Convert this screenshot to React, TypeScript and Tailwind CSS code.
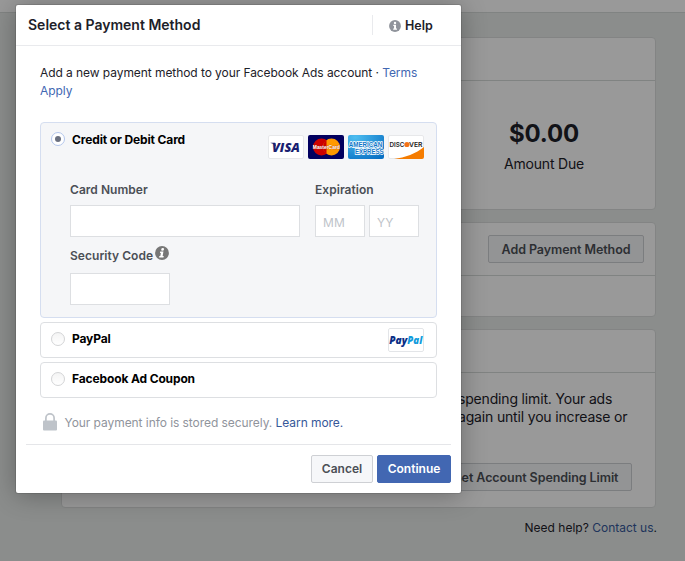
import type { ReactNode } from "react";

function InfoIcon({ size, color, italic = false }: { size: number; color: string; italic?: boolean }) {
  return (
    <svg width={size} height={size} viewBox="0 0 14 14" className="block shrink-0">
      <circle cx="7" cy="7" r="6.9" fill={color} />
      <g fill="#fff" transform={italic ? "skewX(-10) translate(1.2 0)" : undefined}>
        <circle cx="7" cy="3.4" r="1.4" />
        <path d="M5 5.500h3.200v4.500h1.100v1.400H4.900v-1.400h1V6.900H5z" />
      </g>
    </svg>
  );
}

function LockIcon() {
  return (
    <svg width="14" height="18" viewBox="0 0 14 18" className="block shrink-0">
      <path d="M2.900 8V5a4.100 4.100 0 0 1 8.200 0v3" fill="none" stroke="#bec3c9" strokeWidth="1.700" />
      <rect x="0" y="7.500" width="14" height="10" rx="1" fill="#bec3c9" />
    </svg>
  );
}

function VisaLogo() {
  return (
    <svg width="36" height="24" viewBox="0 0 36 24" className="block">
      <rect x=".5" y=".5" width="35" height="23" rx="1.500" fill="#fff" stroke="#e7e8ea" />
      <text x="4" y="17" textLength="28" lengthAdjust="spacingAndGlyphs" fontFamily="Open Sans, sans-serif" fontWeight="800" fontStyle="italic" fontSize="13" fill="#1a1f71">VISA</text>
      <path d="M2.600 7.700h4.500l1.300 4.800C7 9.800 5 8.600 2.600 8z" fill="#1a1f71" />
    </svg>
  );
}

function MasterCardLogo() {
  return (
    <svg width="36" height="24" viewBox="0 0 36 24" className="block overflow-visible">
      <rect width="36" height="24" rx="2" fill="#02005f" />
      <circle cx="13.500" cy="12" r="8.500" fill="#cc0000" />
      <circle cx="23.500" cy="12" r="8.500" fill="#ff9900" />
      <path d="M18.500 5.100a8.500 8.500 0 0 0 0 13.800z" fill="#cc0000" />
      <text x="4.800" y="14.300" textLength="27" lengthAdjust="spacingAndGlyphs" fontFamily="Liberation Sans, sans-serif" fontWeight="700" fontSize="6.200" fill="#fff" stroke="#a02018" strokeWidth=".3" paintOrder="stroke">MasterCard</text>
    </svg>
  );
}

function AmexLogo() {
  return (
    <svg width="36" height="24" viewBox="0 0 36 24" className="block overflow-visible">
      <defs>
        <radialGradient id="amex" cx="20%" cy="10%" r="110%">
          <stop offset="0" stopColor="#4dbdf0" />
          <stop offset="1" stopColor="#0870c4" />
        </radialGradient>
      </defs>
      <rect width="36" height="24" rx="2" fill="url(#amex)" />
      <g fontFamily="Liberation Sans, sans-serif" fontWeight="700" fontSize="6.800" fill="#0d77c8" stroke="#fff" strokeWidth="1.400" paintOrder="stroke">
        <text x=".8" y="11.500" textLength="33.500" lengthAdjust="spacingAndGlyphs">AMERICAN</text>
        <text x="7" y="18.500" textLength="28.500" lengthAdjust="spacingAndGlyphs">EXPRESS</text>
      </g>
    </svg>
  );
}

function DiscoverLogo() {
  return (
    <svg width="36" height="24" viewBox="0 0 36 24" className="block">
      <rect x=".5" y=".5" width="35" height="23" rx="1.500" fill="#fff" stroke="#e7e8ea" />
      <path d="M6 24C17 22.500 28 18.500 36 12v10a2 2 0 0 1-2 2z" fill="#f57c00" />
      <g fontFamily="Inter, sans-serif" fontWeight="600" fontSize="6.600" fill="#222">
        <text x="1.500" y="11.800" textLength="15" lengthAdjust="spacingAndGlyphs">DISC</text>
        <text x="21" y="11.800" textLength="13.500" lengthAdjust="spacingAndGlyphs">VER</text>
      </g>
      <circle cx="18.900" cy="9.500" r="2.600" fill="#f47216" />
    </svg>
  );
}

function PayPalLogo() {
  return (
    <svg width="36" height="24" viewBox="0 0 36 24" className="block">
      <rect x=".5" y=".5" width="35" height="23" rx="1.500" fill="#fff" stroke="#e3e5e8" />
      <g fontFamily="Open Sans, sans-serif" fontWeight="800" fontStyle="italic" fontSize="10">
        <text x="1.300" y="15.600" textLength="18" lengthAdjust="spacingAndGlyphs" fill="#0a2f86">Pay</text>
        <text x="19.300" y="15.600" textLength="15" lengthAdjust="spacingAndGlyphs" fill="#0f9bdc">Pal</text>
      </g>
    </svg>
  );
}

function Radio({ checked = false }: { checked?: boolean }) {
  return checked ? (
    <span className="flex size-[14px] shrink-0 items-center justify-center rounded-full border border-[#b3c6ec] bg-white">
      <span className="size-[6px] rounded-full bg-[#6a7080]" />
    </span>
  ) : (
    <span className="size-[14px] shrink-0 rounded-full border border-[#d3d4d6] bg-linear-to-b from-[#f4f4f4] to-white" />
  );
}

function Panel({ className, children }: { className: string; children?: ReactNode }) {
  return <section className={`flex flex-col rounded-[4px] border border-[#dadddc] bg-white ${className}`}>{children}</section>;
}

function BillingPage() {
  return (
    <div className="flex h-[561px] flex-col bg-[#e8ebea]">
      <div className="h-[13px] shrink-0 border-b border-[#d6dad9] bg-white" />
      <main className="ml-[61px] mt-6 flex w-[595px] flex-col">
        <Panel className="h-[173px]">
          <div className="h-[43px] border-b border-[#d6dad9]" />
          <div className="flex flex-col items-end pr-[76px] pt-[37px]">
            <div className="flex w-[70px] flex-col items-center whitespace-nowrap text-[#1d2129]">
              <strong className="text-[24px] font-bold leading-[32px] tracking-[-0.2px]">$0.00</strong>
              <span className="mt-[4px] text-[14px] leading-[20px] tracking-[-0.2px]">Amount Due</span>
            </div>
          </div>
        </Panel>
        <Panel className="mt-3 h-[95px]">
          <div className="flex h-[53px] items-center justify-end border-b border-[#d6dad9] pr-[11px]">
            <button className="h-7 w-[156px] whitespace-nowrap rounded-[2px] border border-[#ced0d4] bg-[#f6f7f9] pt-[2px] text-[12.500px] font-semibold tracking-[-0.08px] text-[#4b4f56]">Add Payment Method</button>
          </div>
        </Panel>
        <Panel className="mt-3 h-[179px]">
          <div className="h-[43px] shrink-0 border-b border-[#d6dad9]" />
          <p className="ml-[396px] mt-[17px] whitespace-nowrap text-[14px] leading-[18px] tracking-[-0.17px] text-[#1d2129]">
            spending limit. Your ads
            <br />
            again until you increase or
          </p>
          <div className="mt-[37px] flex justify-end pr-[23px]">
            <button className="h-7 w-[192px] whitespace-nowrap rounded-[2px] border border-[#ced0d4] bg-[#f6f7f9] pt-[2px] text-[12.500px] font-semibold tracking-[-0.08px] text-[#4b4f56]">Set Account Spending Limit</button>
          </div>
        </Panel>
        <p className="-mr-px mt-[11px] text-right text-[12px] leading-[18px] text-[#1d2129]">
          Need help? <a className="text-[#365899]">Contact us</a>.
        </p>
      </main>
    </div>
  );
}

function Dialog() {
  return (
    <div className="absolute left-4 top-[5px] flex h-[488px] w-[445px] flex-col rounded-[2px] bg-white shadow-[0_2px_26px_rgba(0,0,0,0.3),0_0_0_1px_rgba(0,0,0,0.1)]">
      <header className="flex h-[41px] shrink-0 items-center justify-between border-b border-[#e9eaed] pl-3">
        <h1 className="pb-[2px] text-[14px] font-semibold text-[#1d2129]">Select a Payment Method</h1>
        <div className="flex h-5 w-[89px] items-center border-l border-[#e9eaed] pl-4 pt-[2px]">
          <InfoIcon size={12} color="#90949c" />
          <span className="ml-1 text-[12.500px] font-semibold text-[#1d2129]">Help</span>
        </div>
      </header>
      <div className="flex flex-col px-6 pt-[18px]">
        <p className="whitespace-nowrap text-[12px] leading-[18px] tracking-[-0.07px] text-[#1d2129]">
          Add a new payment method to your Facebook Ads account · <a className="text-[#4267b2]">Terms
          <br />
          Apply</a>
        </p>
        <div className="mt-[22px] flex w-[397px] flex-col gap-1">
          <section className="flex h-[196px] flex-col rounded-[4px] border border-[#d5def0] bg-[#f5f6f8] pl-[10px] pr-3">
            <div className="flex h-9 shrink-0 pt-[9px]">
              <Radio checked />
              <span className="-mt-px ml-[7px] text-[12px] font-bold leading-[18px] tracking-[-0.13px] text-black">Credit or Debit Card</span>
              <span className="ml-auto mt-[3px] flex h-6 gap-1"><VisaLogo /><MasterCardLogo /><AmexLogo /><DiscoverLogo /></span>
            </div>
            <div className="ml-[19px] mt-[22px] flex gap-[15px] text-[12px] font-semibold leading-[18px] tracking-[0.04px] text-[#4b4f56]">
              <label className="flex w-[230px] flex-col">Card Number
                <input className="mt-[6px] h-8 border border-[#dddfe2] bg-white" />
              </label>
              <div className="flex flex-col">Expiration
                <div className="mt-[6px] flex gap-1">
                  <input placeholder="MM" className="h-8 w-[50px] border border-[#dddfe2] bg-white pl-[7px] pt-[2px] text-[12px] font-normal placeholder:text-[#bec3c9]" />
                  <input placeholder="YY" className="h-8 w-[50px] border border-[#dddfe2] bg-white pl-[7px] pt-[2px] text-[12px] font-normal placeholder:text-[#bec3c9]" />
                </div>
              </div>
            </div>
            <div className="ml-[19px] mt-[10px] flex flex-col text-[12px] font-semibold leading-[18px] tracking-[0.04px] text-[#4b4f56]">
              <div className="flex gap-[2px]">Security Code<span className="-mt-px"><InfoIcon size={14} color="#777" italic /></span></div>
              <input className="mt-2 h-8 w-[100px] border border-[#dddfe2] bg-white" />
            </div>
          </section>
          <section className="flex h-9 items-start rounded-[4px] border border-[#dddfe2] pl-[10px] pr-3 pt-[9px]">
            <Radio />
            <span className="-mt-[2px] ml-[7px] text-[12px] font-bold leading-[18px] tracking-[-0.13px] text-black">PayPal</span>
            <span className="-mt-1 ml-auto"><PayPalLogo /></span>
          </section>
          <section className="flex h-9 items-start rounded-[4px] border border-[#dddfe2] pl-[10px] pr-3 pt-[9px]">
            <Radio />
            <span className="-mt-[2px] ml-[7px] text-[12px] font-bold leading-[18px] tracking-[-0.13px] text-black">Facebook Ad Coupon</span>
          </section>
        </div>
        <p className="ml-[3px] mt-[15px] flex h-[18px] items-center whitespace-nowrap text-[12px] tracking-[-0.06px] text-[#90949c]">
          <LockIcon />
          <span className="ml-[7.500px] pt-[2px]">Your payment info is stored securely. <a className="text-[#365899]">Learn more.</a></span>
        </p>
      </div>
      <footer className="mx-[10px] mt-auto flex h-[49px] shrink-0 justify-end gap-1 border-t border-[#e5e6e9] pt-[10px] text-[12px] font-semibold">
        <button className="h-7 w-[62px] rounded-[2px] border border-[#ced0d4] bg-[#f6f7f9] text-[#4b4f56]">Cancel</button>
        <button className="h-7 w-[74px] rounded-[2px] border border-[#4267b2] bg-[#4267b2] text-white">Continue</button>
      </footer>
    </div>
  );
}

export default function App() {
  return (
    <div className="relative h-[561px] w-[685px] overflow-hidden font-['Inter',sans-serif]">
      <BillingPage />
      <div className="absolute inset-0 bg-black/40" />
      <Dialog />
    </div>
  );
}
